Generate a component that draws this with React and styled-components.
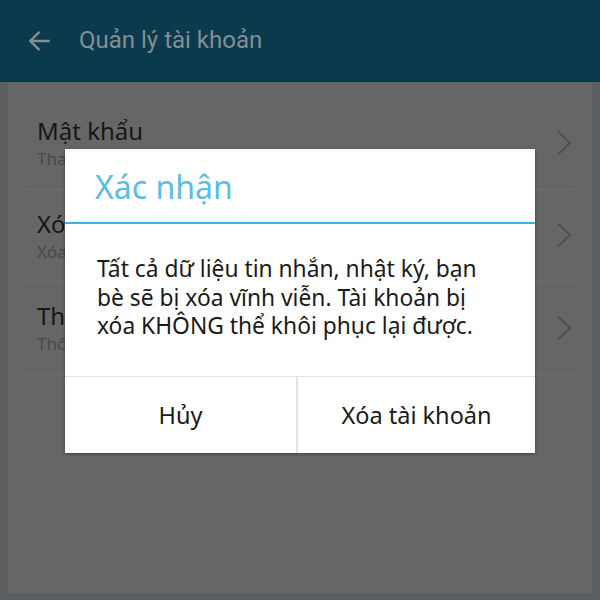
import React from "react";
import styled, { createGlobalStyle } from "styled-components";

const GlobalStyle = createGlobalStyle`
  * { box-sizing: border-box; }
  html, body { margin: 0; padding: 0; }
  body {
    width: 600px;
    height: 600px;
    overflow: hidden;
    background: #5c5f61;
    font-family: "Noto Sans", "Open Sans", sans-serif;
  }
`;

const items = [
  { title: "Mật khẩu", sub: "Thay đổi mật khẩu" },
  { title: "Xóa tài khoản", sub: "Xóa tài khoản vĩnh viễn" },
  { title: "Thông tin tài khoản", sub: "Thông tin cá nhân" },
];

function App() {
  return (
    <>
      <GlobalStyle />
      <Screen>
        <Header>
          <BackIcon viewBox="0 0 24 24">
            <path d="M21 12H3.5M11.5 3.5L3 12l8.5 8.5" />
          </BackIcon>
          <HeaderTitle>Quản lý tài khoản</HeaderTitle>
        </Header>
        <Content>
          <List>
            {items.map((item) => (
              <Row key={item.title}>
                <RowText>
                  <RowTitle>{item.title}</RowTitle>
                  <RowSub>{item.sub}</RowSub>
                </RowText>
                <Chevron viewBox="0 0 16 26">
                  <path d="M2 1.5l12 11.5L2 24.5" />
                </Chevron>
              </Row>
            ))}
          </List>
        </Content>

        <Backdrop>
          <Dialog>
            <DialogTitle>Xác nhận</DialogTitle>
            <DialogBody>
              Tất cả dữ liệu tin nhắn, nhật ký, bạn bè sẽ bị xóa vĩnh viễn.
              Tài khoản bị xóa KHÔNG thể khôi phục lại được.
            </DialogBody>
            <Actions>
              <ActionButton>Hủy</ActionButton>
              <ActionButton>Xóa tài khoản</ActionButton>
            </Actions>
          </Dialog>
        </Backdrop>
      </Screen>
    </>
  );
}

export default App;

const Screen = styled.div`
  position: relative;
  width: 600px;
  height: 600px;
  display: flex;
  flex-direction: column;
`;

const Header = styled.header`
  height: 82px;
  flex-shrink: 0;
  background: #0b3a4d;
  border-bottom: 1px solid #07303f;
  display: flex;
  align-items: center;
  padding-left: 27px;
  gap: 26px;
`;

const BackIcon = styled.svg`
  width: 26px;
  height: 26px;
  fill: none;
  stroke: #858d92;
  stroke-width: 2.2;
`;

const HeaderTitle = styled.h1`
  margin: 0;
  font-family: Roboto, "Noto Sans", sans-serif;
  font-weight: 400;
  font-size: 24px;
  color: #858d92;
  padding-bottom: 1px;
`;

const Content = styled.main`
  flex: 1;
  margin: 0 8px 7px;
  background: #666666;
  padding: 15px 17px 0;
`;

const List = styled.div`
  display: flex;
  flex-direction: column;
`;

const Row = styled.div`
  height: 92.5px;
  display: flex;
  align-items: center;
  justify-content: space-between;
  padding: 0 3px 0 12px;
  border-bottom: 1px solid #707070;
`;

const RowText = styled.div`
  display: flex;
  flex-direction: column;
  gap: 1px;
`;

const RowTitle = styled.div`
  font-size: 24px;
  color: #161616;
  line-height: 32px;
`;

const RowSub = styled.div`
  font-size: 17px;
  color: #494949;
  line-height: 22px;
`;

const Chevron = styled.svg`
  width: 16px;
  height: 26px;
  fill: none;
  stroke: #4b4b4b;
  stroke-width: 1.6;
`;

const Backdrop = styled.div`
  position: absolute;
  inset: 0;
  display: flex;
  align-items: center;
  justify-content: center;
  padding-top: 2px;
`;

const Dialog = styled.div`
  width: 470px;
  height: 304px;
  background: #ffffff;
  display: flex;
  flex-direction: column;
  box-shadow: 0 1px 3px rgba(0, 0, 0, 0.35);
`;

const DialogTitle = styled.div`
  height: 75px;
  padding: 16px 0 0 30px;
  font-size: 32px;
  color: #5bbde6;
  border-bottom: 2px solid #3db1e0;
  line-height: 44px;
`;

const DialogBody = styled.div`
  flex: 1;
  padding: 31px 40px 0 32px;
  font-size: 22.8px;
  line-height: 28.5px;
  color: #1a1a1a;
`;

const Actions = styled.div`
  height: 77px;
  display: grid;
  grid-template-columns: 233px 1fr;
  border-top: 1px solid #e2e2e2;
`;

const ActionButton = styled.button`
  border: none;
  background: #ffffff;
  font-family: "Noto Sans", "Open Sans", sans-serif;
  font-size: 23.5px;
  color: #1a1a1a;
  padding: 0;
  &:first-child {
    border-right: 2px solid #e2e2e2;
  }
`;
